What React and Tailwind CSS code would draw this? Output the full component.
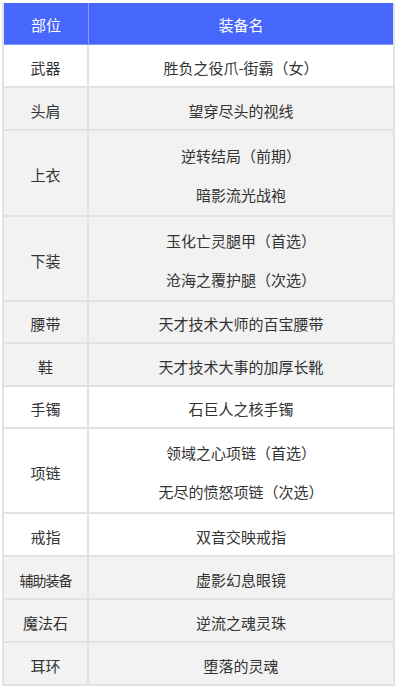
import React from "react";

const rows = [
  { part: "武器", items: ["胜负之役爪-街霸（女）"], gray: false, h: "h-[43px]" },
  { part: "头肩", items: ["望穿尽头的视线"], gray: true, h: "h-[43px]" },
  { part: "上衣", items: ["逆转结局（前期）", "暗影流光战袍"], gray: true, h: "h-[86px]" },
  { part: "下装", items: ["玉化亡灵腿甲（首选）", "沧海之覆护腿（次选）"], gray: true, h: "h-[85px]" },
  { part: "腰带", items: ["天才技术大师的百宝腰带"], gray: true, h: "h-[42px]" },
  { part: "鞋", items: ["天才技术大事的加厚长靴"], gray: true, h: "h-[43px]" },
  { part: "手镯", items: ["石巨人之核手镯"], gray: false, h: "h-[42px]" },
  { part: "项链", items: ["领域之心项链（首选）", "无尽的愤怒项链（次选）"], gray: false, h: "h-[85px]" },
  { part: "戒指", items: ["双音交映戒指"], gray: false, h: "h-[43px]" },
  { part: "辅助装备", items: ["虚影幻息眼镜"], gray: true, h: "h-[43px]", tight: true },
  { part: "魔法石", items: ["逆流之魂灵珠"], gray: true, h: "h-[43px]" },
  { part: "耳环", items: ["堕落的灵魂"], gray: true, h: "h-[43px]" },
];

export default function App() {
  return (
    <div
      className="w-[400px] h-[693px] bg-white pt-[3px] pl-[2px]"
      style={{ fontFamily: '"Microsoft YaHei", "Noto Sans CJK SC", sans-serif' }}
    >
      <div className="w-[393px] border-l-2 border-r-2 border-[#e2e2e2]">
        <div className="flex h-[42px] bg-[#4766fc] text-white text-[15px] border-b border-[#7d93f7]">
          <div className="w-[85px] flex items-center justify-center pt-[3px] border-r border-[#8ea0f5]">部位</div>
          <div className="flex-1 flex items-center justify-center pt-[3px]">装备名</div>
        </div>
        {rows.map((r) => (
          <div
            key={r.part}
            className={`flex ${r.h} border-b-2 border-[#e2e2e2] text-[15px] text-[#333333] ${r.gray ? "bg-[#f2f2f2]" : "bg-white"}`}
          >
            <div
              className={`w-[85px] flex items-center justify-center pt-[5px] border-r-2 border-[#e2e2e2] ${r.tight ? "text-[14px] tracking-[-1px]" : ""}`}
            >
              {r.part}
            </div>
            {r.items.length > 1 ? (
              <div className="flex-1 flex flex-col pt-[5px]">
                {r.items.map((it) => (
                  <div key={it} className="h-[40px] flex items-center justify-center">
                    {it}
                  </div>
                ))}
              </div>
            ) : (
              <div className="flex-1 flex items-center justify-center pt-[5px]">{r.items[0]}</div>
            )}
          </div>
        ))}
      </div>
    </div>
  );
}
